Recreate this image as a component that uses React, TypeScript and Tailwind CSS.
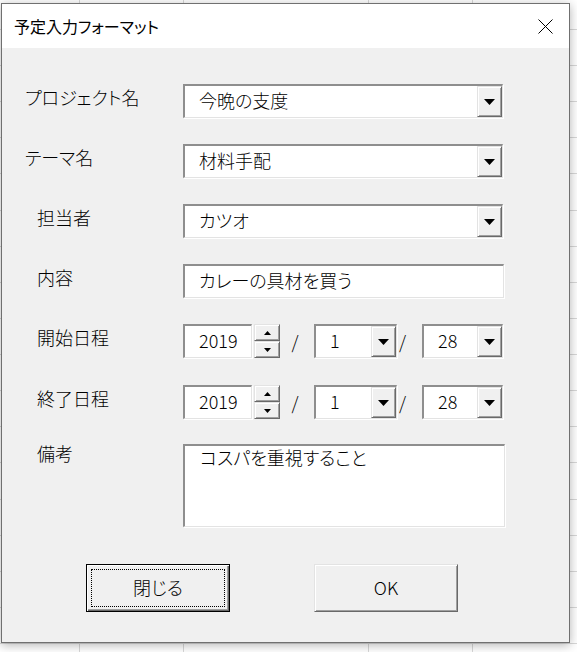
import type { ReactNode } from "react";

// MS UI Gothic の代わりに Noto Sans CJK JP（palt でかなをプロポーショナルに）
const FONT = "font-['Noto_Sans_CJK_JP',sans-serif] [font-feature-settings:'palt'] font-light";

// 凹んだ入力欄（Windows クラシックの 3D 枠）
const SUNKEN =
  "bg-white border-t-2 border-l-2 border-b border-r border-t-[#8e8e8e] border-l-[#8e8e8e] border-b-[#e3e3e3] border-r-[#e3e3e3] shadow-[1px_1px_0_#ffffff]";

// 出っ張ったボタン
const RAISED =
  "bg-[#f0f0f0] border border-t-[#e3e3e3] border-l-[#e3e3e3] border-b-[#696969] border-r-[#696969] shadow-[inset_1px_1px_0_#ffffff,inset_-1px_-1px_0_#a0a0a0]";

const DownArrow = () => (
  <svg width="11" height="6" viewBox="0 0 11 6">
    <polygon points="0,0 11,0 5.5,6" fill="#000" />
  </svg>
);

const SmallArrow = ({ up }: { up?: boolean }) => (
  <svg width="7" height="4" viewBox="0 0 7 4">
    <polygon points={up ? "0,4 7,4 3.5,0" : "0,0 7,0 3.5,4"} fill="#000" />
  </svg>
);

const Combo = ({ value, width }: { value: string; width: string }) => (
  <div className={`${SUNKEN} ${width} h-[34px] flex items-stretch`}>
    <span className="flex-1 flex items-center pl-[14px] pb-[3px] text-[18px] leading-none text-black">{value}</span>
    <div className={`${RAISED} w-[25px] flex items-center justify-center`}>
      <DownArrow />
    </div>
  </div>
);

const TextBox = ({ value, width }: { value: string; width: string }) => (
  <div className={`${SUNKEN} ${width} h-[34px] flex items-center pl-[14px] pb-[3px] text-[18px] leading-none text-black`}>
    {value}
  </div>
);

const Row = ({
  label,
  indent,
  labelTop = "pt-[4px]",
  className = "",
  children,
}: {
  label: string;
  indent: string;
  labelTop?: string;
  className?: string;
  children: ReactNode;
}) => (
  <div className={`flex items-start ${className}`}>
    <span className={`w-[181px] shrink-0 text-[18px] leading-[18px] text-black ${indent} ${labelTop}`}>{label}</span>
    {children}
  </div>
);

const DateRow = ({ year, month, day }: { year: string; month: string; day: string }) => (
  <div className="flex items-stretch h-[34px]">
    <TextBox value={year} width="w-[69px]" />
    <div className="ml-[2px] w-[26px] flex flex-col">
      <div className={`${RAISED} h-[17px] flex items-center justify-center`}>
        <SmallArrow up />
      </div>
      <div className={`${RAISED} h-[17px] flex items-center justify-center`}>
        <SmallArrow />
      </div>
    </div>
    <span className="w-[34px] pt-[8px] pr-[4px] text-center text-[18px] leading-[18px]">/</span>
    <Combo value={month} width="w-[83px]" />
    <span className="w-[25px] pt-[8px] pl-[2px] text-[18px] leading-[18px]">/</span>
    <Combo value={day} width="w-[81px]" />
  </div>
);

export default function App() {
  return (
    <div
      className={`relative w-[577px] h-[652px] overflow-hidden bg-white bg-[repeating-linear-gradient(to_bottom,transparent_0_29px,#d8d8d8_29px_30px,transparent_30px_36.125px),linear-gradient(to_right,transparent_79px,#d8d8d8_79px_80px,transparent_80px_183px,#d8d8d8_183px_184px,transparent_184px_368px,#d8d8d8_368px_369px,transparent_369px_472px,#d8d8d8_472px_473px,transparent_473px)] ${FONT}`}
    >
      {/* ダイアログ本体（Excel シートの上に浮いている） */}
      <div className="absolute left-[1px] top-[3px] w-[569px] h-[640px] flex flex-col border border-[#707070] shadow-[0_2px_10px_rgba(0,0,0,0.3)]">
        {/* タイトルバー */}
        <div className="h-[44px] shrink-0 bg-white flex items-center justify-between pl-[12px] pr-[16px]">
          <span className="text-[16px] font-normal text-black">予定入力フォーマット</span>
          <svg width="15" height="15" viewBox="0 0 15 15">
            <path d="M0.5 0.5 L14.5 14.5 M14.5 0.5 L0.5 14.5" stroke="#000" strokeWidth="1" />
          </svg>
        </div>

        <div className="flex-1 bg-[#f0f0f0] flex flex-col">
          <Row label="プロジェクト名" indent="pl-[23px]" className="mt-[36px]">
            <Combo value="今晩の支度" width="w-[320px]" />
          </Row>
          <Row label="テーマ名" indent="pl-[23px]" className="mt-[26px]">
            <Combo value="材料手配" width="w-[320px]" />
          </Row>
          <Row label="担当者" indent="pl-[35px]" className="mt-[26px]">
            <Combo value="カツオ" width="w-[320px]" />
          </Row>
          <Row label="内容" indent="pl-[35px]" className="mt-[26px]">
            <TextBox value="カレーの具材を買う" width="w-[321px]" />
          </Row>
          <Row label="開始日程" indent="pl-[35px]" className="mt-[26px]">
            <DateRow year="2019" month="1" day="28" />
          </Row>
          <Row label="終了日程" indent="pl-[35px]" className="mt-[27px]">
            <DateRow year="2019" month="1" day="28" />
          </Row>
          <Row label="備考" indent="pl-[35px]" labelTop="pt-0" className="mt-[25px]">
            <div className={`${SUNKEN} w-[322px] h-[83px] pt-[2px] pl-[15px] text-[18px] leading-[18px] text-black`}>
              コスパを重視すること
            </div>
          </Row>

          <div className="mt-[37px] ml-[84px] flex gap-[84px]">
            <button className="relative w-[144px] h-[48px] pb-[2px] bg-[#f0f0f0] border border-black shadow-[inset_1px_1px_0_#ffffff,inset_-1px_-1px_0_#696969,inset_-2px_-2px_0_#a0a0a0] text-[18px] text-black">
              <span className="absolute inset-[4px] border border-dotted border-black" />
              閉じる
            </button>
            <button className={`${RAISED} w-[144px] h-[48px] pb-[2px] text-[18px] text-black`}>OK</button>
          </div>
        </div>
      </div>
    </div>
  );
}
